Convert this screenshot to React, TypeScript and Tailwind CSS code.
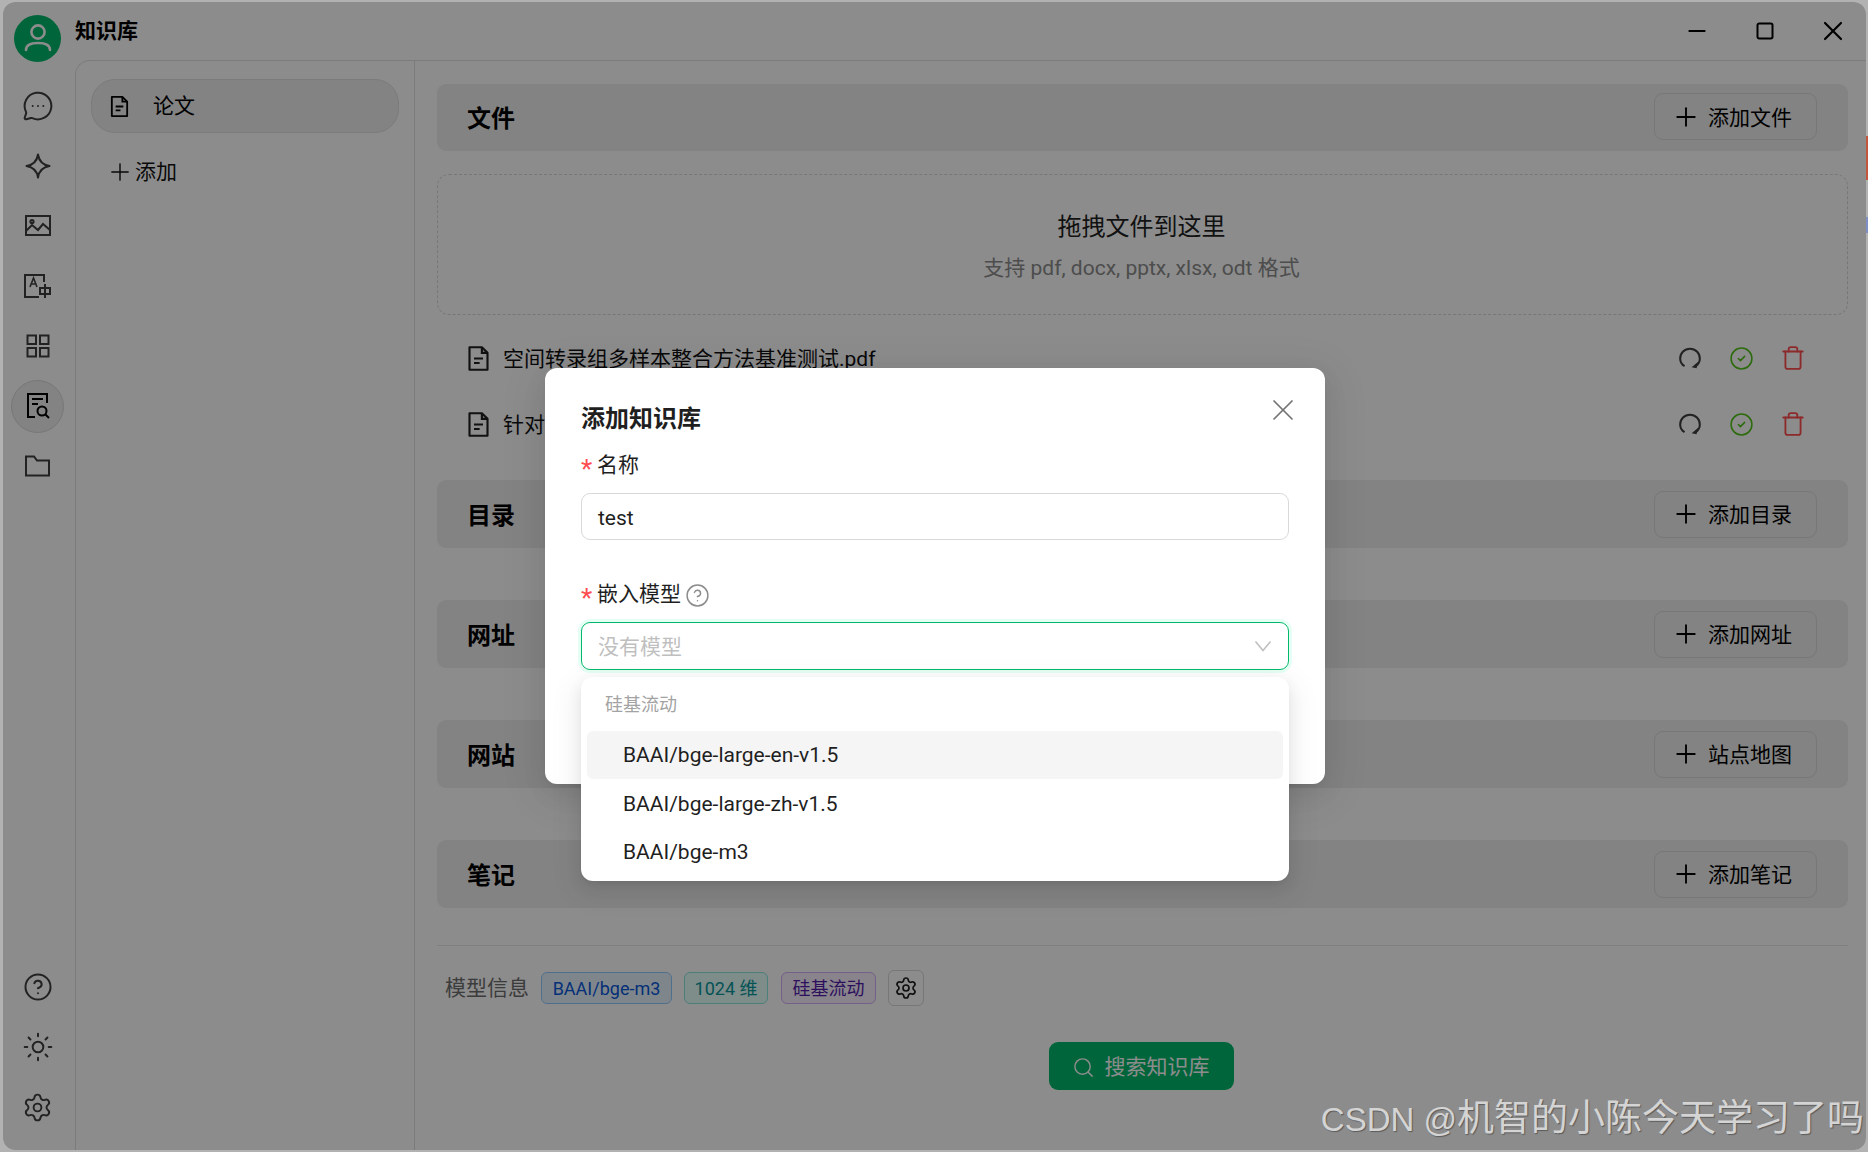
import React from "react";
import { Plus, X, Minus, Square, Search, CircleHelp, Settings, Sun, MessageCircleMore, CircleCheck, Trash } from "lucide-react";

const font = `Roboto,"Noto Sans CJK SC",sans-serif`;

function Star() {
  return (
    <svg width="26" height="26" viewBox="0 0 26 26" fill="none" stroke="#3f3f3f" strokeWidth="2">
      <path d="M13 1.5C14 8 18 12 24.5 13C18 14 14 18 13 24.5C12 18 8 14 1.5 13C8 12 12 8 13 1.5Z" strokeLinejoin="round" />
    </svg>
  );
}
function Doc({ size = 24, color = "#000" }: { size?: number; color?: string }) {
  return (
    <svg width={size} height={size} viewBox="0 0 24 24" fill="none" stroke={color} strokeWidth="1.9">
      <path d="M4 2H15L20 7V22H4Z" strokeLinejoin="round" />
      <path d="M15 2V7H20M8 12H16M8 16H13" />
    </svg>
  );
}
function ImgIcon() {
  return (
    <svg width="26" height="22" viewBox="0 0 26 22" fill="none" stroke="#3f3f3f" strokeWidth="2">
      <rect x="1" y="1" width="24" height="19" />
      <circle cx="7" cy="6.5" r="1.6" />
      <path d="M1 16L7 10L13 15L18 9L25 15" />
    </svg>
  );
}
function Translate() {
  return (
    <svg width="27" height="25" viewBox="0 0 27 25" fill="none" stroke="#3f3f3f" strokeWidth="2">
      <path d="M20 8V1H1V23H15" />
      <path d="M6 13L9.5 4L13 13M7 10H12" strokeWidth="1.6" />
      <path d="M16 14H26V20H16ZM21 10V24" />
    </svg>
  );
}
function Grid() {
  return (
    <svg width="24" height="24" viewBox="0 0 24 24" fill="none" stroke="#3f3f3f" strokeWidth="2">
      <rect x="1.5" y="1.5" width="8.5" height="8.5" />
      <rect x="14" y="1.5" width="8.5" height="8.5" />
      <rect x="1.5" y="14" width="8.5" height="8.5" />
      <rect x="14" y="14" width="8.5" height="8.5" />
    </svg>
  );
}
function FolderIcon() {
  return (
    <svg width="25" height="22" viewBox="0 0 25 22" fill="none" stroke="#3f3f3f" strokeWidth="2">
      <path d="M1 1.5H9L12 5.5H24V20.5H1Z" />
    </svg>
  );
}
function Knowledge() {
  return (
    <svg width="24" height="26" viewBox="0 0 24 26" fill="none" stroke="#000" strokeWidth="2">
      <path d="M21 10V1H2V24H9" />
      <path d="M6 6H17M6 11H12" />
      <circle cx="16" cy="18" r="4.5" />
      <path d="M19.5 21.5L23 25" />
    </svg>
  );
}
function Loop() {
  return (
    <svg width="22" height="24" viewBox="0 0 20 22" fill="none" stroke="#3f3f3f" strokeWidth="1.9">
      <path d="M5 18.5C2.5 17 1 14.5 1 11.5C1 6.5 5 2.5 10 2.5C15 2.5 19 6.5 19 11.5C19 14.5 17.5 17 15 18.5" />
      <path d="M17.5 14.5L16 20.5L11.5 19.5Z" fill="#3f3f3f" stroke="none" />
    </svg>
  );
}
function Chevron() {
  return (
    <svg width="18" height="12" viewBox="0 0 18 12" fill="none" stroke="#bfbfbf" strokeWidth="1.6">
      <path d="M1.5 1.5L9 10.5L16.5 1.5" />
    </svg>
  );
}

function SectionHead({ title, action, first }: { title: string; action: string; first?: boolean }) {
  return (
    <div className={`${first ? "h-[67px]" : "h-[68px]"} rounded-[9px] bg-[#eeeeee] flex items-center justify-between pl-[30px] pr-[31px]`}>
      <span className="text-[24px] font-bold text-black pt-[3px]">{title}</span>
      <button className={`${first ? "mb-[2px]" : ""} h-[47px] w-[163px] rounded-[9px] border border-[#d9d9d9] flex items-center pl-[16px] gap-[7px] text-[21px] text-black`}>
        <Plus size={30} strokeWidth={1.5} />
        <span className="pt-[4px]">{action}</span>
      </button>
    </div>
  );
}

function FileRow({ name }: { name: string }) {
  return (
    <div className="h-[66px] flex items-center pl-[28px] pr-[42px] whitespace-nowrap">
      <Doc size={27} color="#1f1f1f" />
      <span className="ml-[11px] pt-[3px] text-[21px] text-[#111]">{name}</span>
      <div className="ml-auto flex items-center">
        <Loop />
        <CircleCheck size={25} color="#52c41a" strokeWidth={1.5} className="ml-[28px]" />
        <Trash size={26} color="#ff4d4f" strokeWidth={1.7} className="ml-[26px]" />
      </div>
    </div>
  );
}

function Tag({ label, cls }: { label: string; cls: string }) {
  return <span className={`h-[32px] rounded-[6px] border flex items-center justify-center text-[18px] whitespace-nowrap ${cls}`}>{label}</span>;
}

function Req() {
  return <span className="text-[#ff4d4f] w-[16px] text-[26px] leading-[26px] pt-[6px]">*</span>;
}

export default function App() {
  return (
    <div className="relative h-[1152px] w-[1868px] bg-[#b2b2b2] pl-[3px] pt-[2px] pr-[2px] pb-[2px] overflow-hidden" style={{ fontFamily: font }}>
      <div className="absolute right-0 top-[136px] w-[2px] h-[44px] bg-[#c2573e]" />
      <div className="absolute right-0 top-[217px] w-[2px] h-[16px] bg-[#7d8fc4]" />
      <div className="relative h-full w-full rounded-[12px] overflow-hidden bg-white flex flex-col">
        {/* title bar */}
        <div className="h-[58px] shrink-0 flex items-center">
          <div className="w-[72px] flex shrink-0 pt-[14px] pl-[11px]">
            <div className="w-[47px] h-[47px] rounded-full bg-[#00b96b] flex items-center justify-center">
              <svg width="28" height="30" viewBox="0 0 28 30" fill="none" stroke="#ffffff" strokeWidth="2.6">
                <circle cx="14" cy="9" r="6.6" />
                <path d="M2 27C2 22 6 20 14 20C22 20 26 22 26 27" strokeLinecap="round" />
              </svg>
            </div>
          </div>
          <span className="text-[21px] font-bold text-black pt-[2px]">知识库</span>
          <div className="ml-auto flex items-center mr-[17px]">
            <Minus size={26} color="#000" strokeWidth={2} />
            <Square size={20} color="#000" strokeWidth={2.4} className="ml-[45px]" />
            <X size={32} color="#000" strokeWidth={1.6} className="ml-[42px]" />
          </div>
        </div>
        <div className="flex-1 flex min-h-0">
          {/* nav */}
          <div className="w-[72px] shrink-0 flex flex-col items-center pr-[3px] pb-[13px]">
            <div className="flex flex-col items-center">
              <div className="h-[60px] mt-[16px] flex items-center justify-center"><MessageCircleMore size={32} color="#3f3f3f" strokeWidth={1.5} /></div>
              <div className="h-[60px] flex items-center justify-center"><Star /></div>
              <div className="h-[60px] flex items-center justify-center"><ImgIcon /></div>
              <div className="h-[60px] flex items-center justify-center"><Translate /></div>
              <div className="h-[60px] flex items-center justify-center"><Grid /></div>
              <div className="h-[60px] flex items-center justify-center">
                <div className="w-[53px] h-[53px] rounded-full bg-[#eeeeee] border border-[#d9d9d9] flex items-center justify-center"><Knowledge /></div>
              </div>
              <div className="h-[60px] flex items-center justify-center"><FolderIcon /></div>
            </div>
            <div className="mt-auto flex flex-col items-center">
              <div className="h-[60px] flex items-center justify-center"><CircleHelp size={30} color="#3f3f3f" strokeWidth={1.6} /></div>
              <div className="h-[60px] flex items-center justify-center"><Sun size={32} color="#3f3f3f" strokeWidth={1.5} /></div>
              <div className="h-[60px] flex items-center justify-center"><Settings size={31} color="#3f3f3f" strokeWidth={1.5} /></div>
            </div>
          </div>
          {/* content panel */}
          <div className="flex-1 flex min-w-0 border-t border-l border-[#e0e0e0] rounded-tl-[15px]">
            <div className="w-[339px] shrink-0 border-r border-[#e0e0e0] pl-[15px] pr-[15px] pt-[18px]">
              <div className="h-[54px] rounded-[24px] bg-[#eeeeee] border border-[#e0e0e0] flex items-center pl-[16px]">
                <Doc size={23} color="#000" />
                <span className="ml-[22px] pt-[2px] text-[21px] text-black">论文</span>
              </div>
              <div className="mt-[22px] flex items-center pl-[15px] text-[21px] text-[#111]">
                <Plus size={28} strokeWidth={1.2} />
                <span className="ml-[1px] pt-[2px]">添加</span>
              </div>
            </div>
            <div className="flex-1 min-w-0 pl-[22px] pr-[18px] pt-[23px] flex flex-col">
              <SectionHead first title="文件" action="添加文件" />
              <div className="mt-[23px] h-[141px] rounded-[12px] border border-dashed border-[#d9d9d9] flex flex-col items-center justify-center pr-[2px] pt-[3px]">
                <div className="text-[24px] text-[#1f1f1f] leading-[36px]">拖拽文件到这里</div>
                <div className="text-[21px] text-[#8c8c8c] mt-[7px] leading-[32px]">支持 pdf, docx, pptx, xlsx, odt 格式</div>
              </div>
              <div className="mt-[10px]">
                <FileRow name="空间转录组多样本整合方法基准测试.pdf" />
                <FileRow name="针对空间转录组数据的方法基准测试.pdf" />
              </div>
              <div className="mt-[23px]"><SectionHead title="目录" action="添加目录" /></div>
              <div className="mt-[52px]"><SectionHead title="网址" action="添加网址" /></div>
              <div className="mt-[52px]"><SectionHead title="网站" action="站点地图" /></div>
              <div className="mt-[52px]"><SectionHead title="笔记" action="添加笔记" /></div>
              <div className="mt-[37px] border-t border-[#e8e8e8] flex items-center h-[85px] pl-[8px]">
                <span className="text-[21px] text-[#6e6e6e] w-[96px] pt-[2px]">模型信息</span>
                <Tag label="BAAI/bge-m3" cls="w-[131px] bg-[#e6f4ff] border-[#91caff] text-[#0958d9]" />
                <div className="w-[12px]" />
                <Tag label="1024 维" cls="w-[84px] bg-[#e6fffb] border-[#87e8de] text-[#08979c]" />
                <div className="w-[13px]" />
                <Tag label="硅基流动" cls="w-[95px] bg-[#f9f0ff] border-[#d3adf7] text-[#531dab]" />
                <div className="w-[12px]" />
                <div className="w-[36px] h-[36px] rounded-[6px] border border-[#d9d9d9] flex items-center justify-center">
                  <Settings size={24} color="#1f1f1f" strokeWidth={1.7} />
                </div>
              </div>
              <div className="mt-[12px] flex justify-center pr-[2px]">
                <button className="w-[185px] h-[48px] rounded-[9px] bg-[#00b96b] text-white text-[21px] flex items-center justify-center gap-[10px] pt-[3px] pr-[2px]">
                  <Search size={23} strokeWidth={1.5} />
                  搜索知识库
                </button>
              </div>
            </div>
          </div>
        </div>

        {/* mask */}
        <div className="absolute inset-0 bg-black/45" />

        {/* modal */}
        <div className="absolute left-[542px] top-[366px] w-[780px] h-[416px] bg-white rounded-[12px] px-[36px] pt-[33px] shadow-[0_9px_42px_12px_rgba(0,0,0,0.05),0_9px_24px_0_rgba(0,0,0,0.08),0_4px_9px_-6px_rgba(0,0,0,0.12)]">
          <div className="text-[24px] font-bold text-[#1f1f1f] leading-[36px]">添加知识库</div>
          <X size={36} color="#737373" strokeWidth={1.15} className="absolute right-[24px] top-[24px]" />
          <div className="mt-[13px] h-[32px] flex items-center text-[21px] text-[#1f1f1f]">
            <Req />名称
          </div>
          <div className="mt-[11px] h-[47px] rounded-[9px] border border-[#d9d9d9] flex items-center pl-[16px] pt-[4px] text-[21px] text-[#1f1f1f]">test</div>
          <div className="mt-[39px] h-[32px] flex items-center text-[21px] text-[#1f1f1f]">
            <Req />嵌入模型
            <CircleHelp size={25} color="#8c8c8c" strokeWidth={1.4} className="ml-[4px]" />
          </div>
          <div className="mt-[11px] h-[48px] rounded-[9px] border border-[#00b96b] shadow-[0_0_0_3px_rgba(5,255,143,0.1)] flex items-center justify-between pl-[16px] pr-[16px] text-[21px] text-[#bfbfbf]">
            <span className="pt-[4px]">没有模型</span>
            <Chevron />
          </div>
        </div>

        {/* dropdown */}
        <div className="absolute left-[578px] top-[675px] w-[708px] h-[204px] bg-white rounded-[12px] shadow-[0_9px_28px_8px_rgba(0,0,0,0.05),0_6px_16px_0_rgba(0,0,0,0.08),0_3px_6px_-4px_rgba(0,0,0,0.12)] p-[6px]">
          <div className="h-[48px] pl-[18px] pb-[5px] flex items-center text-[18px] text-[#a3a3a3]">硅基流动</div>
          <div className="h-[48px] rounded-[6px] bg-[#f5f5f5] pl-[36px] pt-[2px] flex items-center text-[21px] text-[#1f1f1f]">BAAI/bge-large-en-v1.5</div>
          <div className="h-[48px] pl-[36px] pt-[3px] flex items-center text-[21px] text-[#1f1f1f]">BAAI/bge-large-zh-v1.5</div>
          <div className="h-[48px] pl-[36px] pt-[3px] flex items-center text-[21px] text-[#1f1f1f]">BAAI/bge-m3</div>
        </div>

        {/* watermark */}
        <div className="absolute right-[2px] top-[1097px] leading-[40px] text-[37px] text-[#d4d4d4] whitespace-nowrap [text-shadow:1px_1px_1px_rgba(0,0,0,0.35)]" style={{ fontFamily: `"Liberation Sans","Noto Sans CJK SC",sans-serif` }}>
          <span className="text-[33px]">CSDN @</span>机智的小陈今天学习了吗
        </div>
      </div>
    </div>
  );
}
